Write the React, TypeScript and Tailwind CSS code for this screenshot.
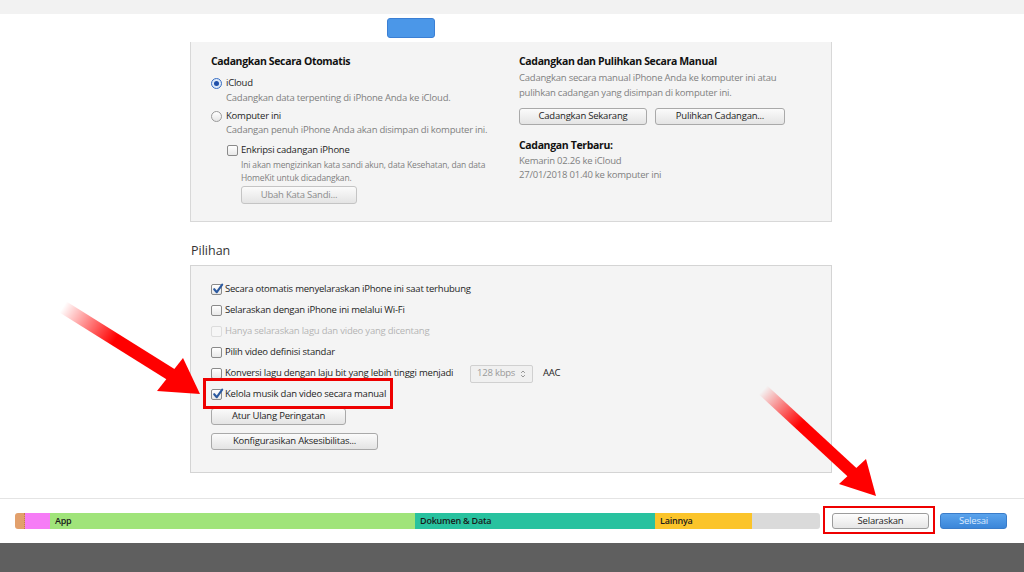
import React from 'react';

const FONT = { fontFamily: '"Open Sans", "Noto Sans", Arial, sans-serif' };

function Checkbox({ checked = false, disabled = false }: { checked?: boolean; disabled?: boolean }) {
  return (
    <span
      className={
        'relative inline-block w-[11px] h-[11px] rounded-[2px] border shrink-0 ' +
        (disabled ? 'border-[#dcdcdc] bg-[#f6f6f6]' : 'border-[#8a8a8a] bg-gradient-to-b from-[#ffffff] to-[#e8e8e8]')
      }
    >
      {checked && (
        <svg viewBox="0 0 12 12" className="absolute left-[0px] top-[-2px] w-[12px] h-[12px]">
          <path d="M2.2 6.2 L4.8 9.2 L10.2 1.6" fill="none" stroke="#2c5aa0" strokeWidth="2.1" strokeLinecap="round" strokeLinejoin="round" />
        </svg>
      )}
    </span>
  );
}

function Radio({ checked = false }: { checked?: boolean }) {
  return (
    <span
      className={
        'relative inline-flex items-center justify-center w-[11px] h-[11px] rounded-full border shrink-0 ' +
        (checked ? 'border-[#3a6fc4] bg-[#dbe8f8]' : 'border-[#9a9a9a] bg-gradient-to-b from-[#ffffff] to-[#e6e6e6]')
      }
    >
      {checked && <span className="w-[5px] h-[5px] rounded-full bg-[#1f4fa8]" />}
    </span>
  );
}

function Btn({ children, w, disabled = false }: { children: React.ReactNode; w: string; disabled?: boolean }) {
  return (
    <div
      className={
        'h-full flex items-center justify-center rounded-[3px] border text-[9.5px] bg-gradient-to-b from-[#fbfbfb] to-[#e4e4e4] ' +
        (disabled ? 'border-[#c4c4c4] text-[#8c8c8c]' : 'border-[#a9a9a9] text-[#1e1e1e]') +
        ' ' + w
      }
    >
      {children}
    </div>
  );
}

function OptRow({ children, checked, disabled }: { children: React.ReactNode; checked?: boolean; disabled?: boolean }) {
  return (
    <div className="h-[21px] flex items-center gap-[3px]">
      <Checkbox checked={checked} disabled={disabled} />
      <span className={'text-[9.5px] ' + (disabled ? 'text-[#b4b4b4]' : 'text-[#1e1e1e]')}>{children}</span>
    </div>
  );
}

export default function App() {
  return (
    <div className="relative w-[1024px] h-[572px] overflow-hidden bg-white text-[#1e1e1e] tracking-[-0.22px]" style={FONT}>
      {/* top strip */}
      <div className="h-[14px] bg-[#f2f2f2]" />
      <div className="h-[28px] pl-[387px] pt-[4px]">
        <div className="w-[48px] h-[20px] rounded-[3px] border border-[#3b7fd4] bg-[#4b97e8]" />
      </div>

      {/* backup panel */}
      <div className="ml-[190px] w-[642px] h-[180px] bg-[#f4f4f4] border-x border-b border-[#d8d8d8] flex pt-[12px] pl-[20px]">
        <div className="w-[308px] flex flex-col">
          <div className="h-[16px] flex items-center text-[10.5px] font-bold text-[#111] tracking-[-0.35px]">Cadangkan Secara Otomatis</div>
          <div className="h-[16px] mt-[5px] flex items-center gap-[4px] text-[9.5px]">
            <Radio checked />
            <span>iCloud</span>
          </div>
          <div className="h-[14px] pl-[15px] flex items-center text-[9.5px] text-[#808080]">Cadangkan data terpenting di iPhone Anda ke iCloud.</div>
          <div className="h-[16px] mt-[3px] flex items-center gap-[4px] text-[9.5px]">
            <Radio />
            <span>Komputer ini</span>
          </div>
          <div className="h-[13px] pl-[15px] flex items-center text-[9.5px] text-[#808080]">Cadangan penuh iPhone Anda akan disimpan di komputer ini.</div>
          <div className="h-[16px] mt-[5px] pl-[16px] flex items-center gap-[3px] text-[9.5px]">
            <Checkbox />
            <span>Enkripsi cadangan iPhone</span>
          </div>
          <div className="pl-[30px] text-[8.5px] leading-[13px] text-[#808080] tracking-[-0.15px]">
            Ini akan mengizinkan kata sandi akun, data Kesehatan, dan data
            <br />
            HomeKit untuk dicadangkan.
          </div>
          <div className="h-[18px] mt-[2px] pl-[30px]">
            <Btn w="w-[116px]" disabled>Ubah Kata Sandi...</Btn>
          </div>
        </div>
        <div className="flex flex-col">
          <div className="h-[16px] flex items-center text-[10.5px] font-bold text-[#111] tracking-[-0.35px]">Cadangkan dan Pulihkan Secara Manual</div>
          <div className="text-[9.5px] leading-[15px] text-[#808080]">
            Cadangkan secara manual iPhone Anda ke komputer ini atau
            <br />
            pulihkan cadangan yang disimpan di komputer ini.
          </div>
          <div className="h-[17px] mt-[8px] flex gap-[8px]">
            <Btn w="w-[128px]">Cadangkan Sekarang</Btn>
            <Btn w="w-[130px]">Pulihkan Cadangan...</Btn>
          </div>
          <div className="h-[16px] mt-[13px] flex items-center text-[10.5px] font-bold text-[#111] tracking-[-0.35px]">Cadangan Terbaru:</div>
          <div className="text-[9.5px] leading-[14px] text-[#808080]">
            Kemarin 02.26 ke iCloud
            <br />
            27/01/2018 01.40 ke komputer ini
          </div>
        </div>
      </div>

      {/* options */}
      <div className="ml-[191px] mt-[21px] h-[16px] flex items-center text-[12.5px] text-[#333] tracking-normal">Pilihan</div>
      <div className="ml-[190px] mt-[6px] w-[642px] h-[208px] bg-[#f4f4f4] border border-[#d4d4d4] pt-[13px] pl-[20px]">
        <OptRow checked>Secara otomatis menyelaraskan iPhone ini saat terhubung</OptRow>
        <OptRow>Selaraskan dengan iPhone ini melalui Wi-Fi</OptRow>
        <OptRow disabled>Hanya selaraskan lagu dan video yang dicentang</OptRow>
        <OptRow>Pilih video definisi standar</OptRow>
        <div className="h-[21px] flex items-center gap-[3px]">
          <Checkbox />
          <span className="text-[9.5px] w-[242px]">Konversi lagu dengan laju bit yang lebih tinggi menjadi</span>
          <div className="w-[63px] h-[18px] rounded-[2px] border border-[#d0d0d0] bg-[#f0f0f0] flex items-center justify-between px-[6px] text-[9.5px] text-[#9a9a9a]">
            <span>128 kbps</span>
            <svg viewBox="0 0 8 12" className="w-[6px] h-[10px]">
              <path d="M1.5 4.5 L4 2 L6.5 4.5 M1.5 7.5 L4 10 L6.5 7.5" fill="none" stroke="#8a8a8a" strokeWidth="1.2" />
            </svg>
          </div>
          <span className="ml-[7px] text-[9.5px]">AAC</span>
        </div>
        <OptRow checked>Kelola musik dan video secara manual</OptRow>
        <div className="h-[17px] mt-[3px]">
          <Btn w="w-[135px]">Atur Ulang Peringatan</Btn>
        </div>
        <div className="h-[17px] mt-[8px]">
          <Btn w="w-[167px]">Konfigurasikan Aksesibilitas...</Btn>
        </div>
      </div>

      {/* bottom bar */}
      <div className="mt-[25px] border-t border-[#e4e4e4] h-[45px] flex items-center pl-[15px]">
        <div className="w-[805px] h-[16px] flex rounded-[3px] overflow-hidden text-[9px] font-semibold text-[#1a1a1a]">
          <div className="w-[10px] bg-[#e2a06c] border-r border-dotted border-[#c77a4a]" />
          <div className="w-[25px] bg-[#f67cf6]" />
          <div className="w-[365px] bg-[#a0e47a] flex items-center pl-[5px]">App</div>
          <div className="w-[240px] bg-[#28c29f] flex items-center pl-[5px]">Dokumen &amp; Data</div>
          <div className="w-[97px] bg-[#fbc42a] flex items-center pl-[5px]">Lainnya</div>
          <div className="flex-1 bg-[#dadada]" />
        </div>
        <div className="ml-[12px] w-[97px] h-[16px] rounded-[3px] border border-[#9c9c9c] bg-gradient-to-b from-[#fdfdfd] to-[#e6e6e6] flex items-center justify-center text-[9.5px] text-[#1e1e1e]">
          Selaraskan
        </div>
        <div className="ml-[11px] w-[67px] h-[16px] rounded-[3px] border border-[#3a7cc9] bg-gradient-to-b from-[#5aa3ec] to-[#3b86d9] flex items-center justify-center text-[9.5px] text-[#dbeaff]">
          Selesai
        </div>
      </div>
      <div className="h-[29px] bg-[#5f5f5f]" />

      {/* highlight boxes */}
      <div className="absolute left-[203px] top-[378px] w-[190px] h-[31px] border-[3px] border-[#ee0000]" />
      <div className="absolute left-[823px] top-[506px] w-[112px] h-[28px] border-[2.5px] border-[#ee0000]" />

      {/* arrows */}
      <svg className="absolute left-0 top-0 pointer-events-none" width="1024" height="572">
        <defs>
          <linearGradient id="fadeL" gradientUnits="userSpaceOnUse" x1="63" y1="307" x2="115" y2="340">
            <stop offset="0" stopColor="#ff0000" stopOpacity="0" />
            <stop offset="1" stopColor="#ff0000" stopOpacity="1" />
          </linearGradient>
          <linearGradient id="fadeR" gradientUnits="userSpaceOnUse" x1="763" y1="390" x2="800" y2="425">
            <stop offset="0" stopColor="#ff0000" stopOpacity="0" />
            <stop offset="1" stopColor="#ff0000" stopOpacity="1" />
          </linearGradient>
        </defs>
        <line x1="63" y1="307" x2="175" y2="377" stroke="url(#fadeL)" strokeWidth="13" />
        <polygon points="200,394 183,358 157,391" fill="#ff0000" />
        <line x1="763" y1="390" x2="855" y2="475" stroke="url(#fadeR)" strokeWidth="12" />
        <polygon points="876,496 866,459 839,484" fill="#ff0000" />
      </svg>
    </div>
  );
}
